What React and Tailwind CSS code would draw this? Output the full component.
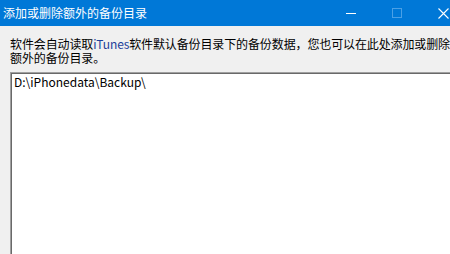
import React from "react";

const App = () => {
  return (
    <div className="w-[450px] h-[254px] overflow-hidden bg-[#f0f0f0] flex flex-col font-['Noto_Sans_CJK_SC',sans-serif] text-[12px] text-black">
      {/* Title bar */}
      <div className="h-[26px] shrink-0 bg-[#0078d7] flex items-center justify-between">
        <span className="pl-[3px] text-white leading-[14px] whitespace-nowrap">
          添加或删除额外的备份目录
        </span>
        <div className="flex items-center h-full">
          <div className="w-[46px] h-full flex items-center justify-center">
            <div className="w-[10px] h-px bg-white" />
          </div>
          <div className="w-[46px] h-full flex items-center justify-center">
            <div className="w-[10px] h-[10px] border border-[#4aa0e6]" />
          </div>
          <div className="w-[30px] h-full flex items-center justify-start pl-[18px]">
            <svg width="11" height="11" viewBox="0 0 11 11">
              <path d="M0.5 0.5 L10.5 10.5 M10.5 0.5 L0.5 10.5" stroke="#fff" strokeWidth="1.1" />
            </svg>
          </div>
        </div>
      </div>

      {/* Description */}
      <div className="pl-[10px] pt-[11px] leading-[14px] whitespace-nowrap tracking-[-0.12px]">
        <div>
          软件会自动读取<span className="text-[#1d3f9a]">iTunes</span>软件默认备份目录下的备份数据，您也可以在此处添加或删除
        </div>
        <div>额外的备份目录。</div>
      </div>

      {/* Directory list */}
      <div className="ml-[10px] mt-[7px] flex-1 bg-white border-t border-l border-[#a0a0a0] -mr-[20px]">
        <div className="h-full border-t border-l border-[#696969] pl-[2px] pt-[1px] leading-[14px] whitespace-nowrap">
          D:\iPhonedata\Backup\
        </div>
      </div>
    </div>
  );
};

export default App;
